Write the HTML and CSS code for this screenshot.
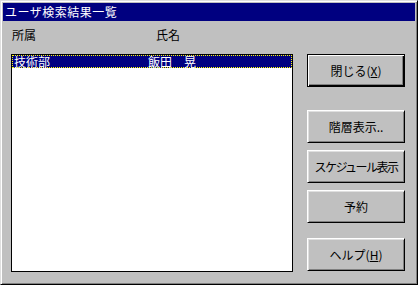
FILE: index.html
```html
<!DOCTYPE html>
<html lang="ja">
<head>
  <meta charset="UTF-8">
  <title>ユーザ検索結果一覧</title>
  <link rel="stylesheet" href="styles.css">
</head>
<body>
  <div class="window">
    <div class="titlebar">ユーザ検索結果一覧</div>

    <div class="content">
      <!-- left side: column headers + list -->
      <div class="left">
        <div class="headers">
          <span class="col-dept">所属</span>
          <span class="col-name">氏名</span>
        </div>
        <div class="listbox">
          <div class="row selected">
            <span class="cell-dept">技術部</span>
            <span class="cell-name">飯田　晃</span>
          </div>
        </div>
      </div>

      <!-- right side: buttons -->
      <div class="buttons">
        <button class="btn default">閉じる(<u>X</u>)</button>
        <button class="btn gap-big">階層表示..</button>
        <button class="btn tight">スケジュール表示</button>
        <button class="btn">予約</button>
        <button class="btn gap-help">ヘルプ(<u>H</u>)</button>
      </div>
    </div>
  </div>
</body>
</html>
```

FILE: styles.css
```css
body {
  margin: 0;
  font-family: "Noto Sans CJK JP", "DejaVu Sans", sans-serif;
  font-size: 12px;
  background: #c0c0c0;
}

.window {
  box-sizing: border-box;
  width: 418px;
  height: 285px;
  background: #c0c0c0;
  border-top: 1px solid #dfdfdf;
  border-left: 1px solid #dfdfdf;
  border-right: 1px solid #000;
  border-bottom: 1px solid #000;
  box-shadow: inset 1px 1px #fff, inset -1px -1px #808080;
  padding: 2px;
  display: flex;
  flex-direction: column;
}

.titlebar {
  height: 18px;
  line-height: 18px;
  background: #000080;
  color: #fff;
  padding-left: 2px;
  letter-spacing: 0.5px;
}

.content {
  flex: 1;
  display: flex;
  gap: 14px;
  padding: 0 0 10px 8px;
}

.left {
  display: flex;
  flex-direction: column;
  width: 282px;
}

.headers {
  box-sizing: border-box;
  height: 33px;
  padding-top: 7px;
  line-height: 14px;
  display: flex;
}

.col-dept {
  width: 144px;
  padding-left: 1px;
}

.listbox {
  flex: 1;
  background: #fff;
  border: 1px solid #000;
}

.row {
  display: flex;
  height: 13px;
  line-height: 12px;
  white-space: nowrap;
}

.row.selected {
  box-sizing: border-box;
  background: #000080;
  color: #fff;
  border: 1px dotted #ffff00;
}

.cell-dept {
  width: 134px;
  padding-left: 1px;
}

.buttons {
  display: flex;
  flex-direction: column;
  gap: 7px;
  padding-top: 33px;
}

.btn {
  box-sizing: border-box;
  width: 98px;
  height: 33px;
  margin: 0;
  padding: 0;
  font-family: inherit;
  font-size: 12px;
  color: #000;
  background: #c0c0c0;
  border-top: 1px solid #fff;
  border-left: 1px solid #fff;
  border-right: 1px solid #000;
  border-bottom: 1px solid #000;
  box-shadow: inset 1px 1px #dfdfdf, inset -1px -1px #808080;
}

.btn.default {
  border: 1px solid #000;
  box-shadow: inset 1px 1px #fff, inset -1px -1px #000, inset -2px -2px #808080;
}

.btn.tight {
  letter-spacing: -1.5px;
}

.btn.gap-big {
  margin-top: 16px;
}

.btn.gap-help {
  margin-top: 8px;
}
```
